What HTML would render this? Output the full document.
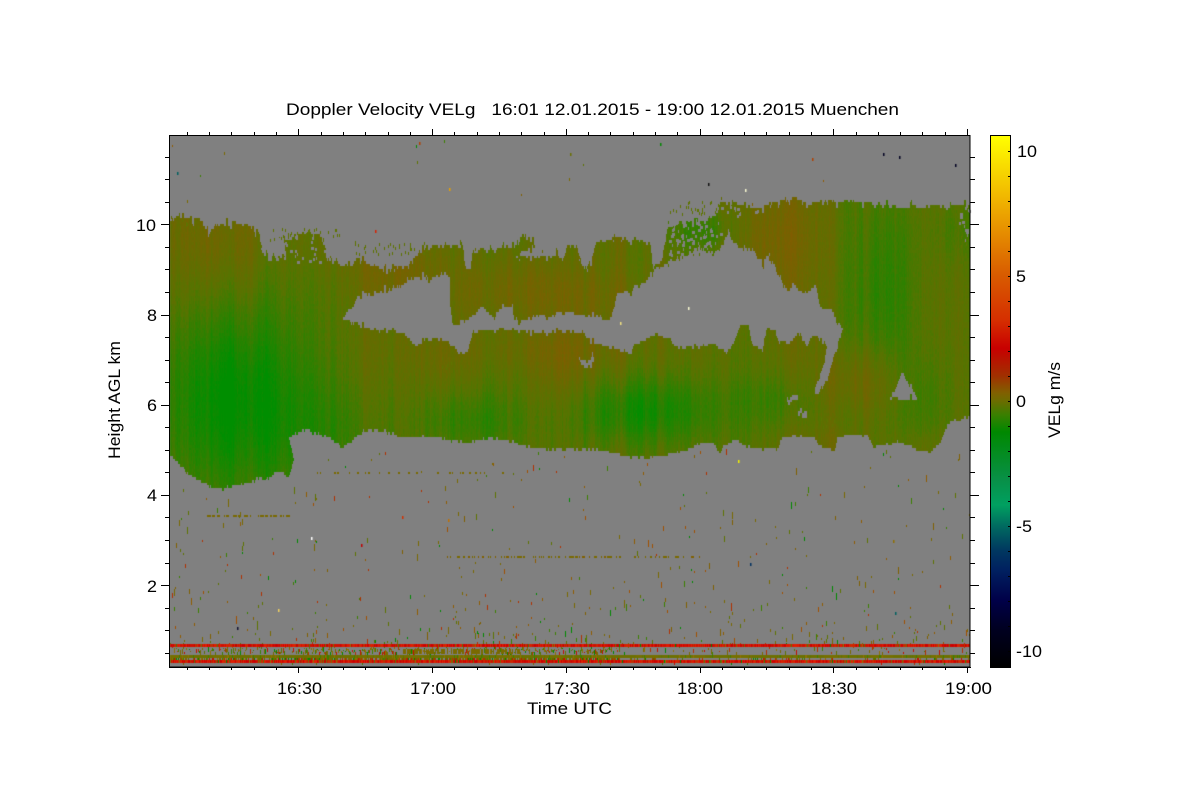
<!DOCTYPE html>
<html>
<head>
<meta charset="utf-8">
<title>Doppler Velocity VELg</title>
<style>
html,body{margin:0;padding:0;background:#fff;width:1200px;height:800px;overflow:hidden}
svg,canvas{position:absolute;left:0;top:0;display:block}
text{font-family:"Liberation Sans",sans-serif;font-size:17px;fill:#000;white-space:pre}
</style>
</head>
<body>
<svg width="1200" height="800" viewBox="0 0 1200 800">
<defs>
<linearGradient id="fb" x1="0" y1="0" x2="0" y2="1"><stop offset="0" stop-color="#746800"/><stop offset="1" stop-color="#2c8000"/></linearGradient>
</defs>
<rect x="170" y="136" width="800" height="531" fill="#808080"/>
<path id="cloud" fill="url(#fb)" fill-rule="evenodd" d="M169 220L185 218L202 220L206 232L218 226L232 223L249 225L259 237L262 253L276 260L286 255L284 240L298 236L309 233L322 237L327 257L342 267L359 260L386 273L396 268L412 265L414 257L429 247L440 247L463 248L465 268L470 268L473 252L493 250L517 245L520 237L533 238L535 247L522 252L515 258L558 257L562 265L567 248L577 247L583 270L593 263L595 245L613 238L650 243L653 268L662 262L668 226L690 221L705 222L718 214L720 203L743 205L758 210L780 203L790 198L807 203L860 203L900 208L970 205L970 417L948 423L940 443L930 453L917 450L900 442L873 447L867 435L837 437L835 452L820 447L813 437L783 437L777 450L747 447L737 440L723 447L720 455L713 443L703 443L687 450L660 457L640 458L620 455L598 450L553 450L528 447L512 442L490 438L468 443L453 442L440 438L402 438L382 432L369 430L356 438L342 448L329 438L306 430L289 437L294 460L289 477L279 472L266 479L239 485L222 490L212 487L189 475L172 457L169 457Z
M342 320L359 297L382 293L396 290L412 278L432 280L446 273L450 280L450 303L453 328L463 323L483 307L493 317L503 307L513 307L513 317L520 322L540 315L550 318L567 313L587 317L600 317L608 322L613 313L617 295L640 287L653 272L673 260L687 255L705 250L713 255L723 247L728 230L733 245L753 250L757 260L763 262L767 257L775 267L782 280L783 290L793 285L800 292L816 287L820 307L833 313L843 330L835 353L828 380L815 398L815 390L820 377L825 360L827 345L813 335L807 345L798 333L793 342L780 343L775 332L767 330L762 350L753 347L748 325L740 325L735 343L727 353L713 345L700 347L678 348L670 340L657 335L650 337L627 353L607 347L590 343L583 333L540 333L507 330L473 332L470 342L468 350L462 358L448 342L426 340L417 347L402 333L382 332L362 328L349 320Z
M902 372L918 400L903 400L890 398L896 390Z
M787 397L798 397L798 402L787 402Z
M798 412L807 409L807 417L798 416Z
M577 355L582 362L590 362L592 354L594 366L583 368Z"/>
</svg>
<canvas id="c" width="1200" height="800"></canvas>
<svg width="1200" height="800" viewBox="0 0 1200 800" id="over">
<defs>
<linearGradient id="cb" x1="0" y1="136" x2="0" y2="667" gradientUnits="userSpaceOnUse">
<stop offset="0" stop-color="#ffff00"/>
<stop offset="0.12" stop-color="#f0b400"/>
<stop offset="0.264" stop-color="#d85a00"/>
<stop offset="0.345" stop-color="#d63000"/>
<stop offset="0.4" stop-color="#c80000"/>
<stop offset="0.452" stop-color="#a03000"/>
<stop offset="0.484" stop-color="#806000"/>
<stop offset="0.499" stop-color="#6c6c00"/>
<stop offset="0.525" stop-color="#3a7f00"/>
<stop offset="0.557" stop-color="#008800"/>
<stop offset="0.648" stop-color="#089048"/>
<stop offset="0.695" stop-color="#00a060"/>
<stop offset="0.735" stop-color="#006a60"/>
<stop offset="0.78" stop-color="#003860"/>
<stop offset="0.818" stop-color="#002060"/>
<stop offset="0.875" stop-color="#000048"/>
<stop offset="0.93" stop-color="#000020"/>
<stop offset="1" stop-color="#000000"/>
</linearGradient>
</defs>
<rect x="990.5" y="135.5" width="20" height="532" fill="url(#cb)" stroke="#000"/>
<g id="ticks" stroke="#000" stroke-width="1" fill="none">
<rect x="169.5" y="135.5" width="800.5" height="531.5"/>
<line x1="169" y1="667.5" x2="971" y2="667.5"/>
</g>
<text x="286" y="115" textLength="613" lengthAdjust="spacingAndGlyphs" xml:space="preserve">Doppler Velocity VELg   16:01 12.01.2015 - 19:00 12.01.2015 Muenchen</text>
<text x="277" y="694" textLength="45" lengthAdjust="spacingAndGlyphs">16:30</text>
<text x="410" y="694" textLength="46" lengthAdjust="spacingAndGlyphs">17:00</text>
<text x="544" y="694" textLength="46" lengthAdjust="spacingAndGlyphs">17:30</text>
<text x="677" y="694" textLength="46" lengthAdjust="spacingAndGlyphs">18:00</text>
<text x="811" y="694" textLength="46" lengthAdjust="spacingAndGlyphs">18:30</text>
<text x="945" y="694" textLength="47" lengthAdjust="spacingAndGlyphs">19:00</text>
<text x="527" y="714" textLength="85" lengthAdjust="spacingAndGlyphs">Time UTC</text>
<text x="136" y="231" textLength="20" lengthAdjust="spacingAndGlyphs">10</text>
<text x="147" y="321" textLength="10" lengthAdjust="spacingAndGlyphs">8</text>
<text x="147" y="411" textLength="10" lengthAdjust="spacingAndGlyphs">6</text>
<text x="147" y="501" textLength="10" lengthAdjust="spacingAndGlyphs">4</text>
<text x="147" y="592" textLength="10" lengthAdjust="spacingAndGlyphs">2</text>
<text transform="translate(120,459) rotate(-90)" textLength="118" lengthAdjust="spacingAndGlyphs">Height AGL km</text>
<text x="1017" y="157" textLength="20" lengthAdjust="spacingAndGlyphs">10</text>
<text x="1016" y="282" textLength="10" lengthAdjust="spacingAndGlyphs">5</text>
<text x="1016" y="407" textLength="10" lengthAdjust="spacingAndGlyphs">0</text>
<text x="1016" y="532" textLength="16" lengthAdjust="spacingAndGlyphs">-5</text>
<text x="1016" y="657" textLength="26" lengthAdjust="spacingAndGlyphs">-10</text>
<text transform="translate(1060,438) rotate(-90)" textLength="76" lengthAdjust="spacingAndGlyphs">VELg m/s</text>
</svg>
<script>
(function(){
var NS="http://www.w3.org/2000/svg",g=document.getElementById("ticks");
function L(a,b,c,d){var l=document.createElementNS(NS,"line");l.setAttribute("x1",a);l.setAttribute("y1",b);l.setAttribute("x2",c);l.setAttribute("y2",d);g.appendChild(l);}
var i,x,y;
for(i=0;i<=35;i++){x=Math.round(186.9+i*22.29)+.5;var maj=(i+1)%6==0&&i>=4;
 L(x,maj?129:132,x,135);L(x,667,x,maj?673:670);}
for(i=-3;i<=19;i++){var km=10-i*.5;y=Math.round(224.3+i*22.55)+.5;var M=(km%2==0);
 L(M?161:165,y,169,y);L(970,y,M?979:975,y);}
for(i=0;i<21;i++){y=151+i*25+.5;L(1008,y,1010,y);}

var seed=12345;function R(){seed=(seed*1664525+1013904223)>>>0;return seed/4294967296;}
var cv=document.getElementById("c"),ctx=cv.getContext("2d");
var W=1200,H=800,path=document.getElementById("cloud").getAttribute("d");
var off=document.createElement("canvas");off.width=W;off.height=H;var oc=off.getContext("2d");
oc.fillStyle="#000";oc.fill(new Path2D(path),"evenodd");
var mask=oc.getImageData(0,0,W,H).data;
function inM(x,y){x=Math.round(x);y=Math.round(y);if(x<0||y<0||x>=W||y>=H)return false;return mask[(y*W+x)*4+3]>128;}
ctx.fillStyle="#808080";ctx.fillRect(170,136,800,531);

function rect(c,x,y,w,h){ctx.fillStyle=c;ctx.fillRect(x,y,w,h);}
function pick(a){return a[Math.floor(R()*a.length)];}
var pal=["#7a6a00","#7a6a00","#806000","#905c00","#a05000","#5e7400","#3c8000","#5e7400","#008a00","#b03000"];
/* low level speckle */
for(i=0;i<500;i++){
 var r=R();y=Math.round(643-195*Math.pow(r,2.1));
 x=170+Math.floor(R()*800);
 rect(pick(pal),x,y,1,2+Math.floor(R()*R()*8));
}
/* high level speckle */
var spots=[[361,544,"#c00000"],[402,516,"#d03000"],[311,537,"#ffffff"],[375,230,"#d82000"],[449,188,"#e8a000"],[708,183,"#101010"],[745,189,"#f8f8d0"],[883,153,"#000020"],[899,156,"#000020"],[955,164,"#000020"],[758,217,"#000020"],[812,158,"#b04000"],[419,142,"#b04000"],[177,172,"#006060"],[660,143,"#008800"],[570,153,"#6a7000"],[738,460,"#f0f000"],[688,307,"#f8f8d0"],[620,322,"#f0e080"],[278,609,"#f0d060"],[237,627,"#101030"],[750,563,"#003060"],[895,612,"#006060"],[893,540,"#907000"],[448,519,"#c07000"]];
for(i=0;i<spots.length;i++)rect(spots[i][2],spots[i][0],spots[i][1],1.5,3);
for(i=0;i<12;i++)rect(pick(pal),170+R()*800|0,140+R()*70|0,1,2+R()*2|0);
for(x=440;x<700;x++){if(R()<.32){var w=1+Math.floor(R()*R()*6);rect(R()<.8?"#7a6a00":"#806000",x,556,w,2);x+=w;}}
for(x=205;x<287;x++){if(R()<.45){w=1+Math.floor(R()*4);rect("#7a6a00",x,515,w,2);x+=w;}}
for(x=310;x<505;x++){if(R()<.13){w=1+Math.floor(R()*2);rect("#7a6a00",x,472,w,2);x+=w;}}

/* velocity field */
var G=[[230,400,75,95,.62],[340,430,60,50,.2],[215,240,60,55,-.22],[330,240,40,40,-.12],[400,270,40,40,-.2],[440,360,30,30,-.1],
[530,290,90,35,-.25],[560,370,30,45,-.2],[530,350,100,20,-.12],[650,410,75,35,.48],[470,420,55,30,.28],[770,240,50,60,-.25],
[885,290,35,95,.28],[860,380,40,35,-.28],[925,400,25,50,.22],[780,400,40,30,.25],[700,230,30,22,.35],
[600,420,40,40,.1],[960,230,30,30,.15],[600,265,45,25,.08],[840,440,30,15,-.12],[920,445,30,15,-.08]];
function base(x,y){var t=.42,k;for(k=0;k<G.length;k++){var a=(x-G[k][0])/G[k][2],b=(y-G[k][1])/G[k][3];t+=G[k][4]*Math.exp(-a*a-b*b);}return t;}
var col=[],sm=0,sm2=0;
for(x=0;x<W;x++){sm=.8*sm+.2*(R()-.5);sm2=.97*sm2+.03*(R()-.5);col[x]=sm*.55+sm2*1.1+(R()-.5)*.08;}
function colr(t){
 t=Math.max(-.08,Math.min(1.05,t));
 var a,b,f;
 if(t<0){a=[150,70,0];b=[130,92,0];f=(t+.2)/.2;}
 else if(t<.5){a=[130,92,0];b=[86,116,0];f=t/.5;}
 else{a=[86,116,0];b=[8,140,0];f=(t-.5)/.5;}
 return "rgb("+Math.round(a[0]+(b[0]-a[0])*f)+","+Math.round(a[1]+(b[1]-a[1])*f)+",0)";
}
var rh=8/3,rows=Math.ceil(531/rh);
var cs=0;
for(x=170;x<970;x++){
 if(x%2==0)cs=R()<.25?(R()-.5)*12:(R()-.5)*4;
 for(var j=0;j<rows;j++){
  var yy=136+j*rh,amp=yy<300?1:(yy<420?.7:.35),js=cs*amp;
  if(R()<.1&&yy<300)js+=(R()-.5)*10;
  if(inM(x,yy+rh/2+js)){
   var t=base(x,yy)+col[x]+(R()-.5)*.1;
   ctx.fillStyle=colr(t);
   ctx.fillRect(x,Math.floor(yy),1,Math.ceil(rh));
  }
 }
}
/* fringe pixels */
var wisps=[[355,265,430,245],[270,245,340,232],[670,225,730,205],[180,215,200,220],[960,207,970,240],[442,340,452,360],[820,395,835,420]];
for(i=0;i<wisps.length;i++){var q=wisps[i];for(var n=0;n<(q[2]-q[0])*.5;n++)rect("#5e7400",q[0]+R()*(q[2]-q[0])|0,q[3]+(R()-.3)*12|0,1,3);}
/* grey pinholes in the ragged wisps */
var gaps=[[668,218,722,258,90],[958,206,970,240,14],[265,236,345,262,40],[720,205,760,216,12]];
for(i=0;i<gaps.length;i++){var h=gaps[i];for(n=0;n<h[4];n++)rect("#808080",h[0]+R()*(h[2]-h[0])|0,h[1]+R()*(h[3]-h[1])|0,1+(R()*3|0),3);}

/* near ground bands */
var reds=["#d01000","#c80000","#e02000","#d00000","#c03000","#e01800","#d01000"];
var mix=["#7a6a00","#5e7400","#907000","#c01000","#3c8000","#008a00","#b03000","#7a6a00","#7a6a00"];
for(x=170;x<970;x++){
 var dens=x<620?(x>300?.85:.6):.16;
 rect(R()<.05?pick(mix):pick(reds),x,644,1,3);
 if(R()<dens){var yy2=647+Math.floor(R()*6);rect(pick(mix),x,yy2,1,1+Math.floor(R()*5));}
 if(x>400&&x<520&&R()<.6)rect("#7a6a00",x,649,1,5);
 rect(R()<.15?pick(["#3c8000","#907000","#5e7400"]):(x%47<25?"#6e7000":"#767000"),x,655,1,3);
 if(R()<dens)rect(pick(mix),x,658,1,2);
 rect(R()<(x<620?.14:.06)?pick(mix):pick(reds),x,660,1,3);
 if(R()<.03)rect(pick(mix),x,663,1,2);
}
document.getElementById("cloud").style.visibility="hidden";
})();
</script>
</body>
</html>
